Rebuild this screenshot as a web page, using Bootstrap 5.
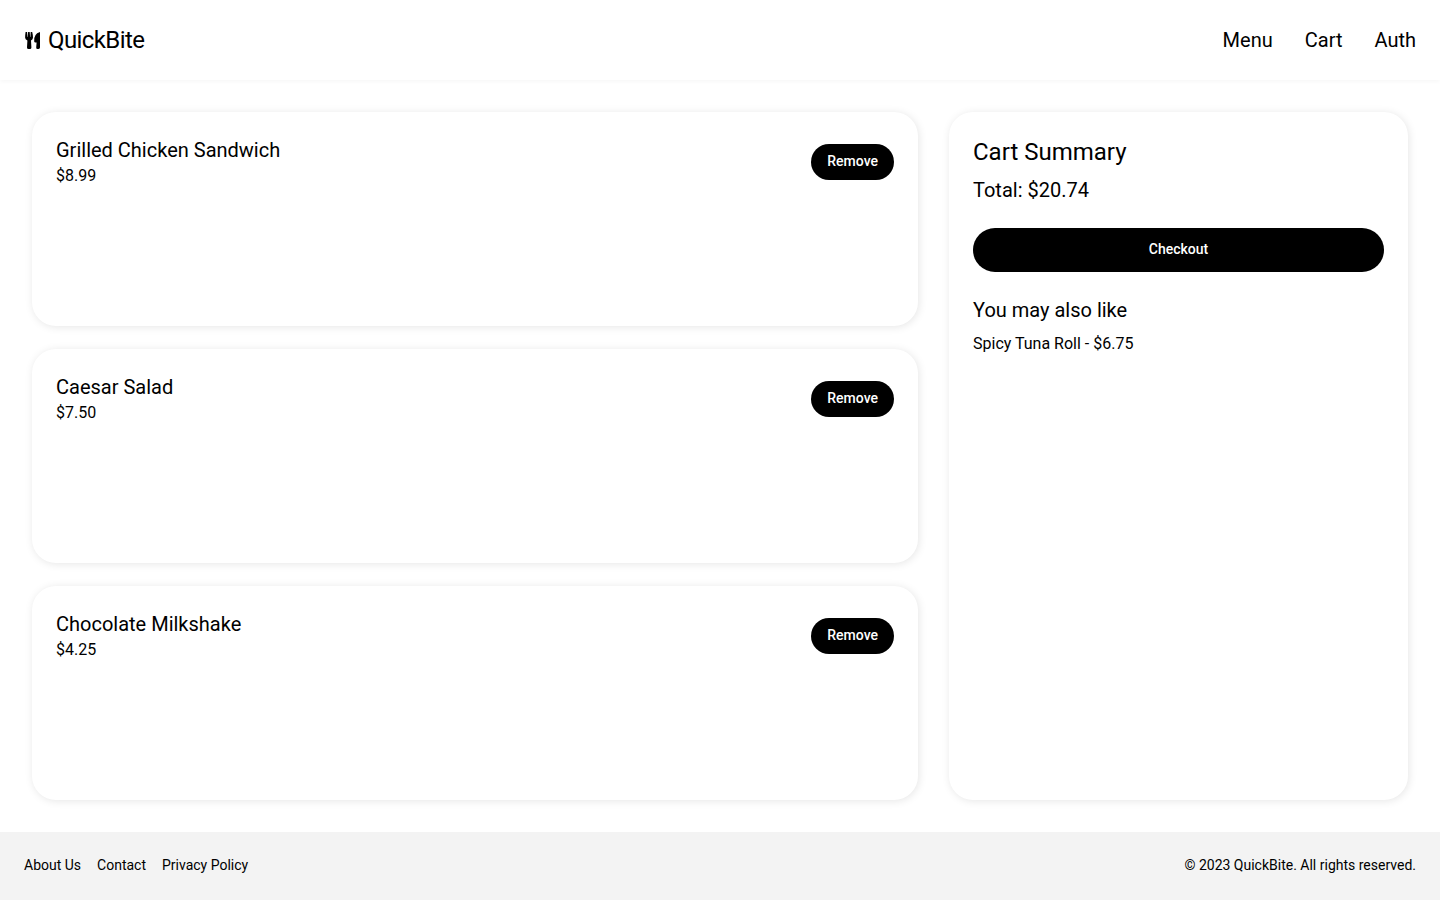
<!DOCTYPE html>
<html lang="en">
<head>
<meta charset="utf-8">
<meta name="viewport" content="width=device-width, initial-scale=1">
<title>QuickBite</title>
<link href="https://cdn.jsdelivr.net/npm/bootstrap@5.3.0/dist/css/bootstrap.min.css" rel="stylesheet">
<style>
body { font-family: Roboto, sans-serif; color: #000; background: #fff; }
a { color: #000; text-decoration: none; }
.site-header { height: 80px; box-shadow: 0 2px 4px rgba(0,0,0,.03); }
.brand { font-size: 24px; line-height: 32px; letter-spacing: -0.6px; }
.site-nav { gap: 32px; font-size: 20px; line-height: 28px; }
.cart-layout { display: grid; grid-template-columns: 1fr; gap: 31px; padding: 32px; }
.cart-items { display: grid; grid-auto-rows: 1fr; gap: 23px; }
.panel { border-radius: 24px; padding: 24px; background: #fff; box-shadow: 1px 1px 8px rgba(0,0,0,.1); }
.text-title { font-size: 24px; line-height: 32px; font-weight: 400; }
.text-sub { font-size: 20px; line-height: 28px; font-weight: 400; }
.btn-pill { --bs-btn-color: #fff; --bs-btn-bg: #000; --bs-btn-hover-color: #fff; --bs-btn-hover-bg: #222; --bs-btn-active-bg: #222; --bs-btn-active-color: #fff; border: 0; font-size: 14px; line-height: 20px; font-weight: 500; padding: 7px 16px 9px; }
.btn-checkout { padding: 11px 16px 13px; }
.site-footer { background: #f3f3f3; padding: 23px 24px 25px; font-size: 14px; line-height: 20px; }
@media (min-width: 992px) { .cart-layout { grid-template-columns: 886fr 459fr; } }
</style>
</head>
<body class="min-vh-100 d-flex flex-column">
<header class="site-header d-flex align-items-center justify-content-between px-4">
  <a href="#" class="brand d-flex align-items-center gap-2">
    <svg width="16" height="18" viewBox="0 0 16 18" aria-hidden="true"><path d="M1.600 1h1.500l.3 5h.3l.4-5h1.600l.4 5h.3l.3-5h1.500Q9 4 9 6.500q0 2.200-2 3.100l.4 6.900q0 1.500-1.500 1.500H4.500Q3 18 3 16.500l.4-6.900q-2.300-.9-2.300-3.100Q1.100 4 1.600 1zM16 1v15.600q0 1.400-1.500 1.400h-.9q-1.500 0-1.400-1.500l.4-4.900h-1.200q-1.100 0-1.200-1.100Q9.400 3 16 1z"/></svg>
    <span>QuickBite</span>
  </a>
  <nav class="site-nav d-flex" aria-label="Main"><a href="#">Menu</a><a href="#">Cart</a><a href="#">Auth</a></nav>
</header>
<main class="cart-layout flex-grow-1">
  <section class="cart-items" aria-label="Cart items">
    <article class="panel d-flex justify-content-between align-items-start">
      <div><h2 class="text-sub m-0">Grilled Chicken Sandwich</h2><p class="m-0">$8.99</p></div>
      <button type="button" class="btn btn-pill rounded-pill mt-2">Remove</button>
    </article>
    <article class="panel d-flex justify-content-between align-items-start">
      <div><h2 class="text-sub m-0">Caesar Salad</h2><p class="m-0">$7.50</p></div>
      <button type="button" class="btn btn-pill rounded-pill mt-2">Remove</button>
    </article>
    <article class="panel d-flex justify-content-between align-items-start">
      <div><h2 class="text-sub m-0">Chocolate Milkshake</h2><p class="m-0">$4.25</p></div>
      <button type="button" class="btn btn-pill rounded-pill mt-2">Remove</button>
    </article>
  </section>
  <aside class="panel">
    <h2 class="text-title mb-2">Cart Summary</h2>
    <p class="text-sub mb-4">Total: $20.74</p>
    <button type="button" class="btn btn-pill btn-checkout rounded-pill w-100 mb-4">Checkout</button>
    <h3 class="text-sub mb-2">You may also like</h3>
    <p class="m-0">Spicy Tuna Roll - $6.75</p>
  </aside>
</main>
<footer class="site-footer d-flex flex-wrap justify-content-between gap-3">
  <nav class="d-flex gap-3" aria-label="Footer"><a href="#">About Us</a><a href="#">Contact</a><a href="#">Privacy Policy</a></nav>
  <span>© 2023 QuickBite. All rights reserved.</span>
</footer>
<script src="https://cdn.jsdelivr.net/npm/bootstrap@5.3.0/dist/js/bootstrap.bundle.min.js"></script>
</body>
</html>
